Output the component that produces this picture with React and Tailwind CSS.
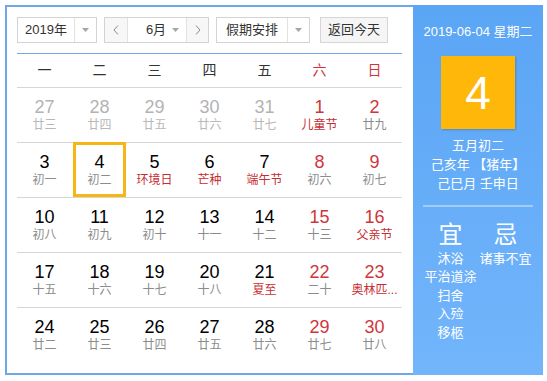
import React from "react";

const weekdays = [
  { t: "一" }, { t: "二" }, { t: "三" }, { t: "四" }, { t: "五" },
  { t: "六", red: true }, { t: "日", red: true },
];

// d: day, l: lunar, o: other month, rn: red number, rl: red lunar, sel: selected
const rows = [
  [
    { d: 27, l: "廿三", o: true }, { d: 28, l: "廿四", o: true }, { d: 29, l: "廿五", o: true },
    { d: 30, l: "廿六", o: true }, { d: 31, l: "廿七", o: true },
    { d: 1, l: "儿童节", rn: true, rl: true }, { d: 2, l: "廿九", rn: true },
  ],
  [
    { d: 3, l: "初一" }, { d: 4, l: "初二", sel: true }, { d: 5, l: "环境日", rl: true },
    { d: 6, l: "芒种", rl: true }, { d: 7, l: "端午节", rl: true },
    { d: 8, l: "初六", rn: true }, { d: 9, l: "初七", rn: true },
  ],
  [
    { d: 10, l: "初八" }, { d: 11, l: "初九" }, { d: 12, l: "初十" }, { d: 13, l: "十一" },
    { d: 14, l: "十二" }, { d: 15, l: "十三", rn: true }, { d: 16, l: "父亲节", rn: true, rl: true },
  ],
  [
    { d: 17, l: "十五" }, { d: 18, l: "十六" }, { d: 19, l: "十七" }, { d: 20, l: "十八" },
    { d: 21, l: "夏至", rl: true }, { d: 22, l: "二十", rn: true }, { d: 23, l: "奥林匹...", rn: true, rl: true },
  ],
  [
    { d: 24, l: "廿二" }, { d: 25, l: "廿三" }, { d: 26, l: "廿四" }, { d: 27, l: "廿五" },
    { d: 28, l: "廿六" }, { d: 29, l: "廿七", rn: true }, { d: 30, l: "廿八", rn: true },
  ],
];

const Caret = () => (
  <svg width="7" height="4" viewBox="0 0 7 4">
    <path d="M0 0h7L3.5 4z" fill="#a6a6a6" />
  </svg>
);

const Chevron = ({ dir }) => (
  <svg width="6" height="10" viewBox="0 0 6 10">
    <path
      d={dir === "left" ? "M5 0.5L1 5l4 4.5" : "M1 0.5L5 5l-4 4.5"}
      fill="none"
      stroke="#8a8a8a"
      strokeWidth="1"
    />
  </svg>
);

function DayCell({ c }) {
  const numColor = c.o ? "text-[#b3b3b3]" : c.rn ? "text-[#d1353b]" : "text-black";
  const lunarColor = c.o ? "text-[#b8b8b8]" : c.rl ? "text-[#c62d32]" : "text-[#8c8c8c]";
  return (
    <div className="relative flex w-[55px] flex-col items-center pt-[9px]">
      {c.sel && (
        <div className="absolute left-[1px] top-[-1px] h-[55px] w-[53px] border-[3px] border-[#f6b615]" />
      )}
      <div className={`text-[18px] leading-[20px] ${numColor}`}>{c.d}</div>
      <div className={`whitespace-nowrap text-[12px] leading-[16px] ${lunarColor}`}>{c.l}</div>
    </div>
  );
}

export default function App() {
  return (
    <div className="h-[381px] w-[547px] bg-white pl-[5px] pt-[5px] font-['Liberation_Sans','Noto_Sans_CJK_SC',sans-serif]">
      <div className="flex h-[370px] w-[538px]">
        {/* left: calendar */}
        <div className="flex w-[408px] flex-col border-2 border-r-0 border-[#6ea8ea] pl-[10px] pr-[4px] pt-[10px]">
          <div className="flex h-[26px] items-stretch text-[13px] text-[#333]">
            <div className="flex w-[80px] border border-[#d3d3d3] bg-white">
              <div className="flex w-[56px] items-center justify-center">2019年</div>
              <div className="flex flex-1 items-center justify-center border-l border-[#e2e2e2]">
                <Caret />
              </div>
            </div>
            <div className="ml-[7px] flex w-[105px] border border-[#d3d3d3] bg-white">
              <div className="flex w-[22px] items-center justify-center bg-[#f7f7f7]">
                <Chevron dir="left" />
              </div>
              <div className="flex w-[60px] items-center border-x border-[#e2e2e2] pl-[12px]">
                <span className="w-[32px] text-center">6月</span>
                <Caret />
              </div>
              <div className="flex flex-1 items-center justify-center bg-[#f7f7f7]">
                <Chevron dir="right" />
              </div>
            </div>
            <div className="ml-[7px] flex w-[94px] border border-[#d3d3d3] bg-white">
              <div className="flex w-[70px] items-center justify-center">假期安排</div>
              <div className="flex flex-1 items-center justify-center border-l border-[#e2e2e2]">
                <Caret />
              </div>
            </div>
            <div className="ml-[10px] flex w-[68px] items-center justify-center border border-[#d6d6d6] bg-[#f5f5f5]">
              返回今天
            </div>
          </div>

          <div className="mt-[10px] h-px w-[385px] bg-[#6ea8ea]" />

          <div className="flex h-[34px] w-[385px] items-center border-b border-[#d6d6d6] text-[14px]">
            {weekdays.map((w) => (
              <div
                key={w.t}
                className={`w-[55px] text-center ${w.red ? "text-[#d1353b]" : "text-[#333]"}`}
              >
                {w.t}
              </div>
            ))}
          </div>

          {rows.map((r, i) => (
            <div
              key={i}
              className={`flex h-[55px] w-[385px] ${i < rows.length - 1 ? "border-b border-[#d6d6d6]" : ""}`}
            >
              {r.map((c) => (
                <DayCell key={`${i}-${c.d}`} c={c} />
              ))}
            </div>
          ))}
        </div>

        {/* right: today panel */}
        <div className="flex w-[130px] flex-col items-center bg-gradient-to-b from-[#5aa5f5] to-[#72b5fb] pt-[17px] text-white">
          <div className="text-[13px] leading-[20px]">2019-06-04 星期二</div>
          <div className="mt-[14px] flex h-[73px] w-[74px] items-center justify-center bg-[#ffb70a] text-[46px] leading-none shadow-[1px_1px_2px_rgba(0,0,0,0.2)]">
            4
          </div>
          <div className="mt-[7px] flex flex-col items-center text-[13px] leading-[19px]">
            <div>五月初二</div>
            <div>己亥年 【猪年】</div>
            <div>己巳月 壬申日</div>
          </div>
          <div className="mt-[12px] h-[2px] w-[110px] bg-[#a3cdf8]" />
          <div className="mt-[13px] grid w-[110px] grid-cols-2">
            <div className="flex flex-col items-center">
              <div className="text-[24px] leading-[30px]">宜</div>
              <div className="flex flex-col items-center text-[13px] leading-[18.4px]">
                <div>沐浴</div>
                <div className="whitespace-nowrap">平治道涂</div>
                <div>扫舍</div>
                <div>入殓</div>
                <div>移柩</div>
              </div>
            </div>
            <div className="flex flex-col items-center">
              <div className="text-[24px] leading-[30px]">忌</div>
              <div className="flex flex-col items-center text-[13px] leading-[18.4px]">
                <div className="whitespace-nowrap">诸事不宜</div>
              </div>
            </div>
          </div>
        </div>
      </div>
    </div>
  );
}
